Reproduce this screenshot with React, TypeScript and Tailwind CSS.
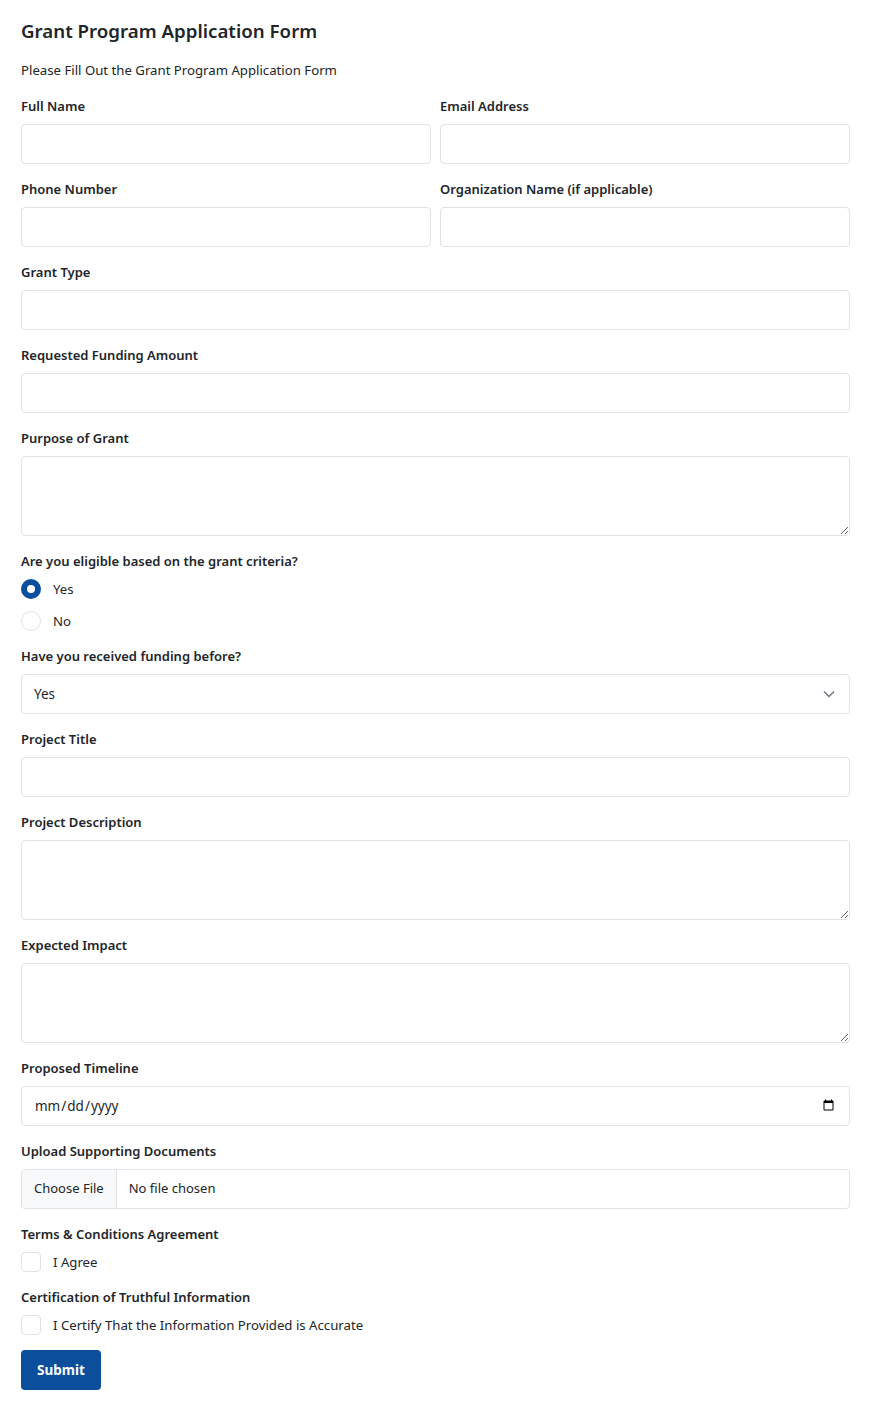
import React from 'react';

const font = { fontFamily: '"Noto Sans", "Open Sans", sans-serif' };

const inputCls =
  'block w-full h-10 rounded border border-[#dee2e6] bg-white px-3 text-[13.5px] text-[#212529] outline-none';

const areaCls = 'block h-20 w-full rounded border border-[#dee2e6] px-3 py-2 text-[13.5px] outline-none';

function Label({ children }: { children: React.ReactNode }) {
  return <label className="mb-2 block text-[13px] font-semibold leading-5 text-[#212529]">{children}</label>;
}

function Field({ label, children }: { label: string; children: React.ReactNode }) {
  return (
    <div>
      <Label>{label}</Label>
      {children}
    </div>
  );
}

function Check({ text }: { text: string }) {
  return (
    <label className="flex items-center gap-3 text-[13.2px] leading-5">
      <input type="checkbox" className="h-5 w-5 shrink-0 appearance-none rounded border border-[#dee2e6] bg-white" />
      {text}
    </label>
  );
}

export default function App() {
  const [eligible, setEligible] = React.useState('yes');

  return (
    <div className="min-h-screen bg-white text-[#212529]" style={font}>
      <form className="pl-[21px] pr-[24px] pt-[17px] pb-5" onSubmit={(e) => e.preventDefault()}>
        <h1 className="text-[18.7px] font-semibold leading-7 text-[#212529]">Grant Program Application Form</h1>
        <p className="mt-[15px] mb-[16px] text-[13.2px] leading-5">Please Fill Out the Grant Program Application Form</p>

        <div className="flex flex-col items-stretch gap-[15px]">
          <div className="grid grid-cols-2 gap-[9px]">
            <Field label="Full Name">
              <input type="text" className={inputCls} />
            </Field>
            <Field label="Email Address">
              <input type="email" className={inputCls} />
            </Field>
          </div>
          <div className="grid grid-cols-2 gap-[9px]">
            <Field label="Phone Number">
              <input type="tel" className={inputCls} />
            </Field>
            <Field label="Organization Name (if applicable)">
              <input type="text" className={inputCls} />
            </Field>
          </div>
          <Field label="Grant Type">
            <input type="text" className={inputCls} />
          </Field>
          <Field label="Requested Funding Amount">
            <input type="text" className={inputCls} />
          </Field>
          <Field label="Purpose of Grant">
            <textarea className={areaCls} />
          </Field>

          <div>
            <Label>Are you eligible based on the grant criteria?</Label>
            <div className="flex flex-col gap-3">
              {[
                ['yes', 'Yes'],
                ['no', 'No'],
              ].map(([v, t]) => (
                <label key={v} className="flex h-5 items-center gap-3 text-[13.2px] leading-5">
                  <input
                    type="radio"
                    name="eligible"
                    checked={eligible === v}
                    onChange={() => setEligible(v)}
                    className="m-0 h-5 w-5 shrink-0 appearance-none rounded-full border border-[#dee2e6] bg-white checked:border-[6px] checked:border-[#0b4f9c]"
                  />
                  {t}
                </label>
              ))}
            </div>
          </div>

          <Field label="Have you received funding before?">
            <div className="relative">
              <select className={inputCls + ' appearance-none pr-9'} defaultValue="Yes">
                <option>Yes</option>
                <option>No</option>
              </select>
              <svg
                className="pointer-events-none absolute right-[15px] top-1/2 -translate-y-1/2"
                width="12"
                height="8"
                viewBox="0 0 12 8"
                fill="none"
                stroke="#6b7280"
                strokeWidth="1.4"
              >
                <path d="M1 1.5l5 5 5-5" />
              </svg>
            </div>
          </Field>

          <Field label="Project Title">
            <input type="text" className={inputCls} />
          </Field>
          <Field label="Project Description">
            <textarea className={areaCls} />
          </Field>
          <Field label="Expected Impact">
            <textarea className={areaCls} />
          </Field>
          <Field label="Proposed Timeline">
            <input type="date" className={inputCls} />
          </Field>
          <Field label="Upload Supporting Documents">
            <input
              type="file"
              className="block h-10 w-full rounded border border-[#dee2e6] pr-3 text-[13px] text-[#212529] file:mr-3 file:h-full file:border-0 file:border-r file:border-solid file:border-[#dee2e6] file:bg-[#f8f9fa] file:px-3 file:text-[13px] file:text-[#212529]"
            />
          </Field>

          <div>
            <Label>Terms &amp; Conditions Agreement</Label>
            <Check text="I Agree" />
          </div>
          <div>
            <Label>Certification of Truthful Information</Label>
            <Check text="I Certify That the Information Provided is Accurate" />
          </div>

          <div>
            <button type="submit" className="h-10 rounded bg-[#0b4f9c] px-[16px] text-[13.5px] font-bold text-white">
              Submit
            </button>
          </div>
        </div>
      </form>
    </div>
  );
}
